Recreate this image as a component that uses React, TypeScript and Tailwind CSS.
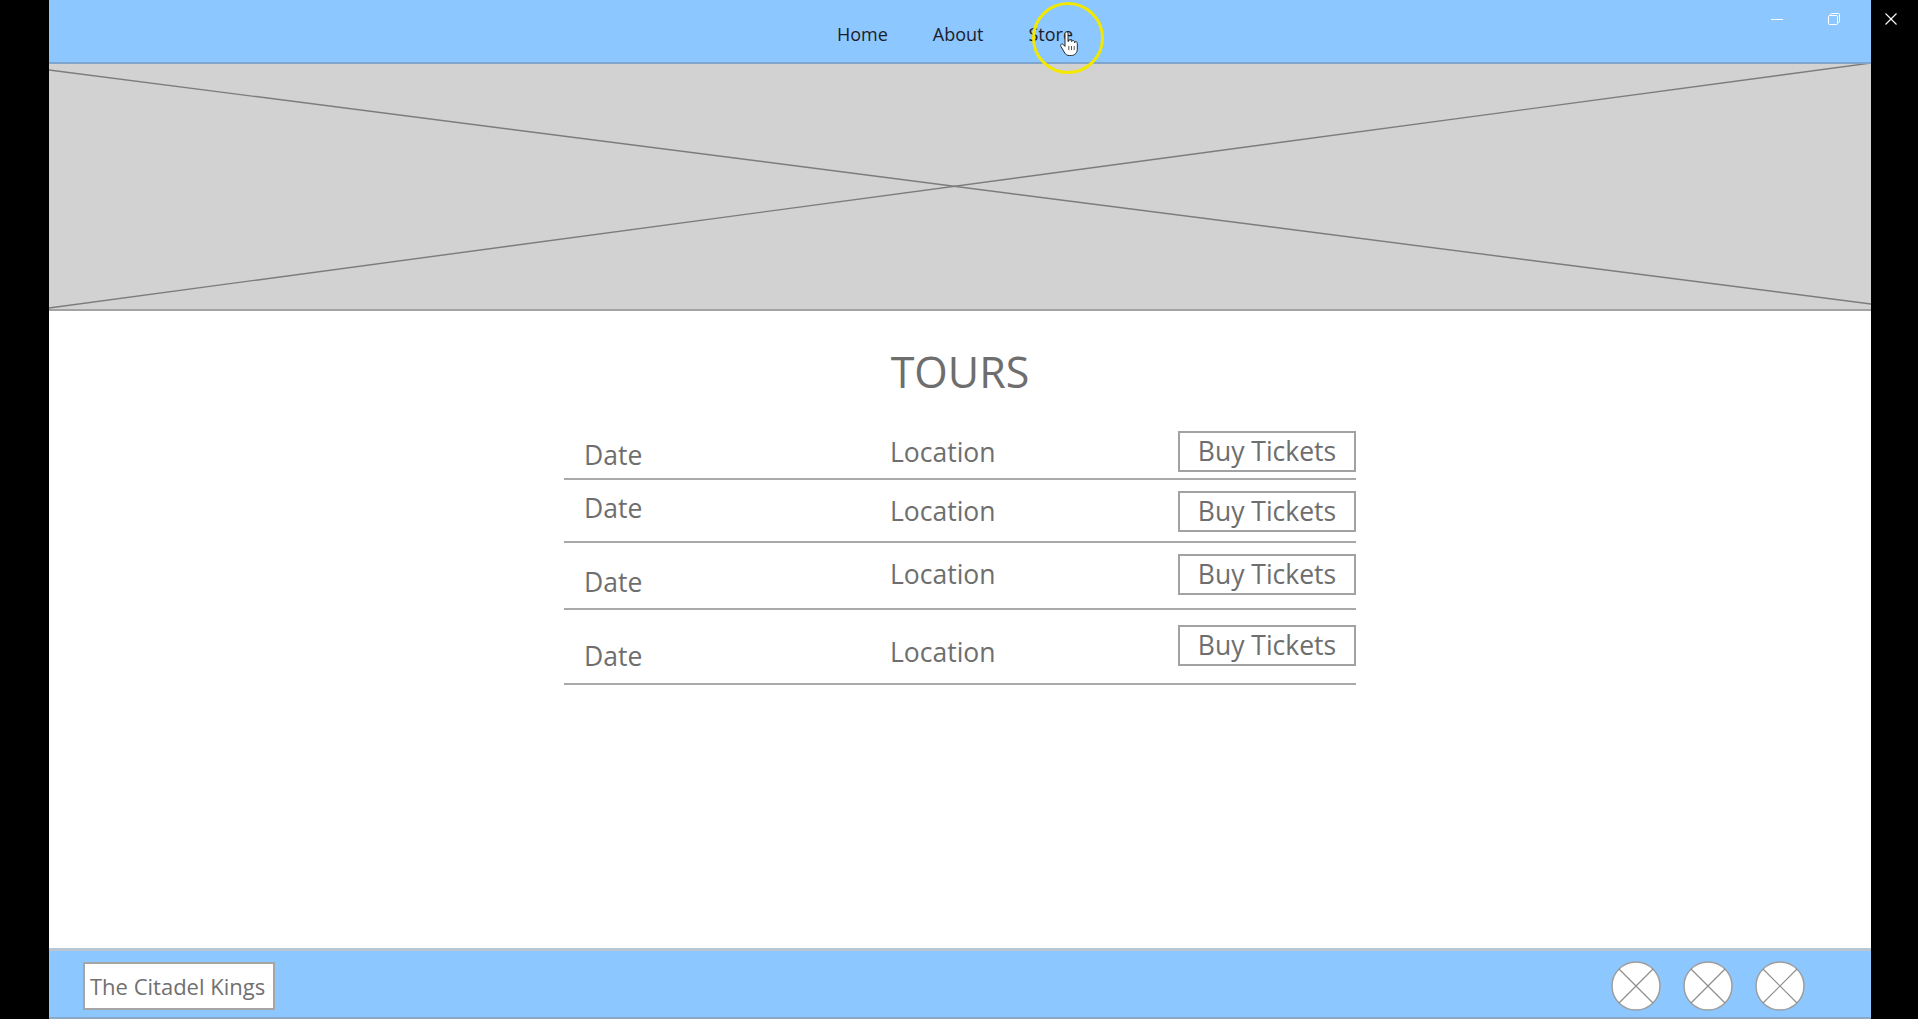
import React from "react";

const font = { fontFamily: '"Open Sans", "Noto Sans", Arial, sans-serif' };

type Tour = {
  h: string;
  date: string;
  loc: string;
  btn: string;
};

// wireframe rows are hand placed, so every row keeps its own offsets
const tours: Tour[] = [
  { h: "h-[53px]", date: "mt-[10px]", loc: "mt-[7px]", btn: "mt-[4px]" },
  { h: "h-[63px]", date: "mt-[10px]", loc: "mt-[13px]", btn: "mt-[11px]" },
  { h: "h-[67px]", date: "mt-[21px]", loc: "mt-[13px]", btn: "mt-[11px]" },
  { h: "h-[75px]", date: "mt-[28px]", loc: "mt-[24px]", btn: "mt-[15px]" },
];

const CrossCircle = () => (
  <svg width="50" height="50" viewBox="0 0 50 50">
    <circle cx="25" cy="25" r="24" fill="#ffffff" stroke="#9e9e9e" strokeWidth="1.5" />
    <line x1="8" y1="8" x2="42" y2="42" stroke="#8f8f8f" strokeWidth="1.2" />
    <line x1="42" y1="8" x2="8" y2="42" stroke="#8f8f8f" strokeWidth="1.2" />
  </svg>
);

const HandCursor = () => (
  <svg width="22" height="26" viewBox="0 0 22 26">
    <path
      d="M6 2.5c0-1 .7-1.6 1.5-1.6S9 1.5 9 2.5v8l.6-.1c0-1 .7-1.6 1.5-1.6s1.4.6 1.4 1.6l.1.3c.2-.8.8-1.2 1.5-1.2.8 0 1.4.6 1.4 1.6v.6c.2-.6.8-1 1.4-1 .8 0 1.4.6 1.4 1.6v5.8c0 3.6-2.4 6.4-6 6.4h-2c-2 0-3.400-.9-4.5-2.4L2 15.6c-.6-.8-.4-1.8.3-2.3.7-.5 1.6-.3 2.2.4L6 15.4V2.5z"
      fill="#ffffff"
      stroke="#2a2a2a"
      strokeWidth="1"
      strokeLinejoin="round"
    />
    <line x1="12.5" y1="15" x2="12.5" y2="19" stroke="#2a2a2a" strokeWidth="0.8" />
    <line x1="15.2" y1="15" x2="15.2" y2="19" stroke="#2a2a2a" strokeWidth="0.8" />
    <line x1="9.8" y1="15" x2="9.8" y2="19" stroke="#2a2a2a" strokeWidth="0.8" />
  </svg>
);

export default function App() {
  return (
    <div className="relative flex h-[1019px] w-[1918px] overflow-hidden bg-black" style={font}>
      <div className="w-[49px] shrink-0 bg-black" />

      <div className="flex w-[1822px] shrink-0 flex-col bg-white">
        {/* header */}
        <header className="grid h-[64px] grid-cols-[1fr_auto_1fr] border-b-2 border-[#7fa5cc] bg-[#8dc7ff]">
          <div />
          <nav className="flex items-center gap-[45px] pr-[10px] pt-[6px] text-[18px] text-[#1c1c2c]">
            <span>Home</span>
            <span>About</span>
            <span>Store</span>
          </nav>
          <div className="flex items-start justify-end gap-[45px] pr-[31px] pt-[13px]">
            <svg width="12" height="12" viewBox="0 0 12 12">
              <line x1="0" y1="6.5" x2="12" y2="6.5" stroke="#ffffff" strokeWidth="1" />
            </svg>
            <svg width="12" height="12" viewBox="0 0 12 12">
              <rect x="0.5" y="2.5" width="9" height="9" rx="1" fill="none" stroke="#ffffff" strokeWidth="1" />
              <path d="M2.5 2.5V1.5a1 1 0 0 1 1-1h7a1 1 0 0 1 1 1v7a1 1 0 0 1-1 1h-1" fill="none" stroke="#ffffff" strokeWidth="1" />
            </svg>
          </div>
        </header>

        {/* hero placeholder */}
        <div className="h-[247px] shrink-0 border-b-2 border-[#a3a3a3] bg-[#d2d2d2]">
          <svg className="h-full w-full" viewBox="0 0 1822 245" preserveAspectRatio="none">
            <line x1="0" y1="6" x2="1822" y2="240" stroke="#7c7c7c" strokeWidth="1.4" vectorEffect="non-scaling-stroke" />
            <line x1="0" y1="244" x2="1822" y2="-1" stroke="#7c7c7c" strokeWidth="1.4" vectorEffect="non-scaling-stroke" />
          </svg>
        </div>

        {/* tours */}
        <main className="flex-1 pt-[37px] text-[#6e6e6e]">
          <h1 className="h-[48px] text-center text-[43px] leading-[48px]">TOURS</h1>
          <div className="mx-auto mt-[31px] w-[792px]">
            {tours.map((t, i) => (
              <div key={i} className={`flex border-b-2 border-[#a9a9a9] ${t.h}`}>
                <div className={`h-[36px] w-[326px] pl-[20px] text-[26.5px] leading-[36px] ${t.date}`}>Date</div>
                <div className={`h-[36px] flex-1 text-[26.5px] leading-[36px] ${t.loc}`}>Location</div>
                <button
                  className={`flex h-[41px] w-[178px] items-center justify-center border-2 border-[#a2a2a2] bg-white text-[26.5px] text-[#6e6e6e] ${t.btn}`}
                >
                  Buy Tickets
                </button>
              </div>
            ))}
          </div>
        </main>

        {/* footer */}
        <footer className="flex h-[71px] items-start justify-between border-t-[3px] border-b-2 border-t-[#b9c6d3] border-b-[#8aa9c6] bg-[#8dc7ff] pl-[34px] pr-[66px]">
          <div className="mt-[11px] flex h-[48px] w-[192px] items-center border-2 border-[#a5a5a5] bg-white pl-[5px] text-[22px] text-[#707070]">
            The Citadel Kings
          </div>
          <div className="mt-[10px] flex gap-[22px]">
            <CrossCircle />
            <CrossCircle />
            <CrossCircle />
          </div>
        </footer>
      </div>

      <div className="flex-1 bg-black pl-[14px] pt-[13px]">
        <svg width="12" height="12" viewBox="0 0 12 12">
          <line x1="0.5" y1="0.5" x2="11.5" y2="11.5" stroke="#ffffff" strokeWidth="1.1" />
          <line x1="11.5" y1="0.5" x2="0.5" y2="11.5" stroke="#ffffff" strokeWidth="1.1" />
        </svg>
      </div>

      {/* cursor highlight over the nav */}
      <div className="pointer-events-none absolute left-[1032px] top-[2px] h-[72px] w-[72px] rounded-full border-[3px] border-[#f3e800]" />
      <div className="pointer-events-none absolute left-[1059px] top-[31px]">
        <HandCursor />
      </div>
    </div>
  );
}
